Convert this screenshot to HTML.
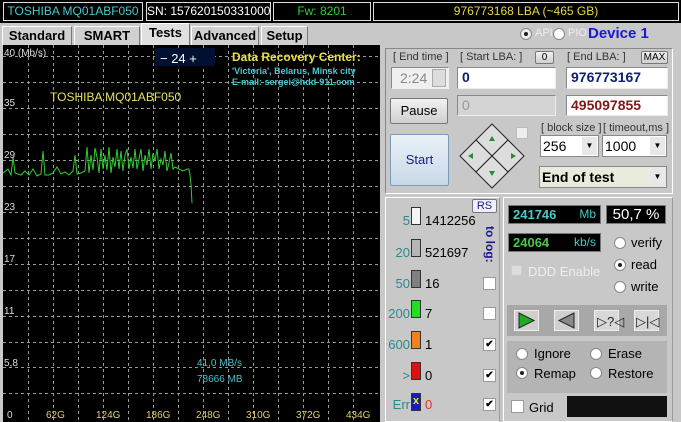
<!DOCTYPE html>
<html><head><meta charset="utf-8"><style>
*{margin:0;padding:0;box-sizing:border-box}
body{width:681px;height:422px;overflow:hidden;background:#c8c8c8;font-family:"Liberation Sans",sans-serif;font-size:12px;position:relative}
div,span{white-space:nowrap}
.a{position:absolute}
.seg{position:absolute;top:2px;height:19px;border:1px solid #ddd;background:#000;text-align:center;font-size:12px;line-height:17px;overflow:hidden}
.tab{position:absolute;top:26px;height:19px;border:1px solid #fff;border-right-color:#777;border-bottom:none;font-weight:bold;font-size:13px;line-height:17px;text-align:center;background:#d0d0d0}
.in{position:absolute;background:#fff;border:1px solid #888;border-right-color:#eee;border-bottom-color:#eee;font-weight:bold;font-size:14px;line-height:19px;padding-left:4px}
.btn{position:absolute;border:1px solid #777;border-radius:2px;background:linear-gradient(#f2f2f2,#cfcfcf);text-align:center;font-size:13px}
.lbl{position:absolute;font-size:11px;color:#333}
.sel{position:absolute;background:#fff;border:1px solid #888;font-size:14px;line-height:20px;padding-left:2px}
.sel:after{content:"▼";position:absolute;right:1px;top:1px;width:15px;height:18px;background:#e8e8e8;font-size:8px;text-align:center;line-height:18px}
.n{position:absolute;width:32px;text-align:right;color:#2a8a8a;font-size:13px;left:378px}
.bx{position:absolute;left:411px;width:10px;height:18px;border:1px solid #333}
.v{position:absolute;left:425px;font-size:13px}
.cb{position:absolute;left:483px;width:13px;height:13px;background:#fff;border:1px solid #999;font-size:10px;line-height:11px;text-align:center;font-weight:bold}
.rd{position:absolute;width:12px;height:12px;border-radius:50%;background:#fff;border:1px solid #888}
.rd.on:after{content:"";position:absolute;left:3px;top:3px;width:4px;height:4px;border-radius:50%;background:#123}
.rt{position:absolute;font-size:13px}
</style></head><body>
<div class="a" style="left:0;top:0;width:681px;height:23px;background:#000"></div>
<div class="seg" style="left:3px;width:140px;color:#4ec6d0">TOSHIBA MQ01ABF050</div>
<div class="seg" style="left:146px;width:125px;color:#fff">SN: 1576201503310007F</div>
<div class="seg" style="left:273px;width:98px;color:#3c3">Fw: 8201</div>
<div class="seg" style="left:373px;width:306px;color:#e8d84a">976773168 LBA (~465 GB)</div>
<div class="tab" style="left:2px;width:70px">Standard</div>
<div class="tab" style="left:74px;width:66px">SMART</div>
<div class="tab" style="left:141px;width:49px;top:23px;height:22px;background:#e0e0e0">Tests</div>
<div class="tab" style="left:191px;width:68px">Advanced</div>
<div class="tab" style="left:261px;width:47px">Setup</div>
<div class="rd on" style="left:520px;top:28px;background:#eee"></div><div class="rt" style="left:535px;top:27px;color:#eee;font-size:11px">API</div>
<div class="rd" style="left:553px;top:28px"></div><div class="rt" style="left:568px;top:27px;color:#eee;font-size:11px">PIO</div>
<div class="rt" style="left:588px;top:25px;color:#1a1ad0;font-weight:bold;font-size:15px">Device 1</div>

<svg class="a" style="left:3px;top:45px" width="377" height="377">
<rect width="377" height="377" fill="#000"/>
<g stroke="#999" stroke-dasharray="3,3" stroke-width="1">
<path d="M25.5 0V377M50.5 0V377M75.5 0V377M100.5 0V377M125.5 0V377M150.5 0V377M175.5 0V377M200.5 0V377M225.5 0V377M250.5 0V377M275.5 0V377M300.5 0V377M325.5 0V377M350.5 0V377"/>
<path d="M0 11.5H377M0 37.5H377M0 63.5H377M0 89.5H377M0 115.5H377M0 141.5H377M0 167.5H377M0 193.5H377M0 219.5H377M0 245.5H377M0 271.5H377M0 297.5H377M0 322.5H377M0 348.5H377"/>
</g>
<polyline fill="none" stroke="#3c3" stroke-width="1" points="0,128 5,124 8,130 10,112 12,128 18,130 22,126 26,130 30,124 34,131 38,129 40,106 42,130 46,130 50,128 54,122 58,129 62,127 66,130 70,126 72,110 74,129 78,128 82,126 84,102 86,128 88,110 90,125 92,103 94,112 96,128 98,104 100,124 102,110 104,125 106,102 108,128 110,112 112,122 114,104 116,124 118,106 120,126 122,110 124,104 126,124 128,112 130,123 132,104 134,124 136,114 138,104 140,126 142,110 144,120 146,104 148,124 150,108 152,116 154,104 156,124 158,114 160,120 162,106 164,126 166,118 168,108 170,124 172,122 176,124 180,126 184,124 186,124 187,130 188,140 189,158"/>
<g font-size="10" fill="#ddd" font-family="Liberation Sans">
<text x="1" y="11">40 (Mb/s)</text><text x="1" y="61">35</text><text x="1" y="113">29</text><text x="1" y="165">23</text><text x="1" y="217">17</text><text x="1" y="269">11</text><text x="1" y="321">5,8</text><text x="4" y="373">0</text>
</g>
<g font-size="10" fill="#e0d070" font-family="Liberation Sans">
<text x="43" y="373">62G</text><text x="93" y="373">124G</text><text x="143" y="373">186G</text><text x="193" y="373">248G</text><text x="243" y="373">310G</text><text x="293" y="373">372G</text><text x="343" y="373">434G</text>
</g>
<text x="47" y="56" font-size="12" fill="#e8e060" font-family="Liberation Sans">TOSHIBA MQ01ABF050</text>
<rect x="152" y="3" width="60" height="18" fill="#001030"/>
<text x="157" y="18" font-size="13" fill="#fff" font-family="Liberation Sans">−  24  +</text>
<text x="229" y="16" font-size="12" font-weight="bold" fill="#e8e040" font-family="Liberation Sans">Data Recovery Center:</text>
<text x="229" y="29" font-size="9" font-weight="bold" fill="#4ac8d0" font-family="Liberation Sans">'Victoria', Belarus, Minsk city</text>
<text x="229" y="40" font-size="9" font-weight="bold" fill="#4ac8d0" font-family="Liberation Sans">E-mail: sergei@hdd-911.com</text>
<text x="194" y="321" font-size="10" fill="#4ac0c8" font-family="Liberation Sans">41,0 MB/s</text>
<text x="194" y="337" font-size="10" fill="#4ac0c8" font-family="Liberation Sans">78666 MB</text>
</svg>

<div class="a" style="left:385px;top:48px;width:288px;height:146px;border:1px solid #888;border-right-color:#fff;border-bottom-color:#fff"></div>
<div class="lbl" style="left:393px;top:51px">[ End time ]</div>
<div class="lbl" style="left:460px;top:51px">[ Start LBA: ]</div>
<div class="btn" style="left:535px;top:51px;width:19px;height:13px;font-size:10px;line-height:11px">0</div>
<div class="lbl" style="left:567px;top:51px">[ End LBA: ]</div>
<div class="btn" style="left:641px;top:51px;width:27px;height:13px;font-size:10px;line-height:11px">MAX</div>
<div class="in" style="left:391px;top:67px;width:58px;height:22px;background:#f0f0f0;color:#888;font-weight:normal;line-height:20px;padding-left:8px">2:24</div>
<div class="a" style="left:432px;top:69px;width:14px;height:18px;background:#ddd;border:1px solid #aaa"></div>
<div class="in" style="left:457px;top:67px;width:99px;height:22px;color:#102070">0</div>
<div class="in" style="left:566px;top:67px;width:102px;height:22px;color:#102070">976773167</div>
<div class="btn" style="left:390px;top:98px;width:58px;height:26px;line-height:24px">Pause</div>
<div class="in" style="left:457px;top:95px;width:99px;height:21px;background:#d4d4d4;color:#999;font-weight:normal">0</div>
<div class="in" style="left:566px;top:95px;width:102px;height:21px;color:#801818">495097855</div>
<div class="btn" style="left:390px;top:134px;width:59px;height:52px;line-height:50px;background:linear-gradient(#eaf2f8,#c8d8e8);border-color:#7a9ab8;color:#1a1a90">Start</div>
<svg class="a" style="left:459px;top:123px" width="66" height="67"><g stroke="#222" fill="#ddd"><path d="M33 1L49 17L33 33L17 17Z"/><path d="M17 17L33 33L17 49L1 33Z"/><path d="M49 17L65 33L49 49L33 33Z"/><path d="M33 33L49 49L33 65L17 49Z"/></g><g fill="#2a8a3a"><path d="M33 13l3 5h-6z"/><path d="M9 33l5-3v6z"/><path d="M57 33l-5-3v6z"/><path d="M33 53l3-5h-6z"/></g></svg>
<div class="a" style="left:516px;top:127px;width:12px;height:12px;background:#eee;border:1px solid #bbb"></div>
<div class="lbl" style="left:541px;top:122px">[ block size ]</div>
<div class="lbl" style="left:603px;top:122px">[ timeout,ms ]</div>
<div class="sel" style="left:540px;top:135px;width:59px;height:22px">256</div>
<div class="sel" style="left:602px;top:135px;width:65px;height:22px">1000</div>
<div class="sel" style="left:539px;top:166px;width:128px;height:22px;background:#e8ecdc;font-weight:bold">End of test</div>

<div class="a" style="left:385px;top:197px;width:115px;height:225px;border:1px solid #fff;border-right-color:#999"></div>
<div class="btn" style="left:472px;top:199px;width:25px;height:14px;font-size:11px;line-height:12px;color:#1a1a90;background:#f0f0f8">RS</div>
<div class="a" style="top:226px;color:#1a1a90;font-weight:bold;font-size:12px;transform:rotate(90deg);transform-origin:left top;left:497px">to log:</div>
<div class="n" style="top:213px">5</div><div class="bx" style="top:207px;background:#f4f4f4"></div><div class="v" style="top:213px">1412256</div>
<div class="n" style="top:245px">20</div><div class="bx" style="top:239px;background:#b4b4b4"></div><div class="v" style="top:245px">521697</div>
<div class="n" style="top:276px">50</div><div class="bx" style="top:270px;background:#808080"></div><div class="v" style="top:276px">16</div>
<div class="n" style="top:306px">200</div><div class="bx" style="top:300px;background:#22dd22"></div><div class="v" style="top:306px">7</div>
<div class="n" style="top:337px">600</div><div class="bx" style="top:331px;background:#f08020"></div><div class="v" style="top:337px">1</div>
<div class="n" style="top:368px">&gt;</div><div class="bx" style="top:362px;background:#e01010"></div><div class="v" style="top:368px">0</div>
<div class="n" style="top:397px">Err</div><div class="bx" style="top:393px;background:#1a1ac0;color:#ee0;font-size:11px;line-height:14px;text-align:center;font-weight:bold">x</div><div class="v" style="top:397px;color:#e03030">0</div>
<div class="cb" style="top:277px"></div><div class="cb" style="top:307px"></div><div class="cb" style="top:338px">✔</div><div class="cb" style="top:369px">✔</div><div class="cb" style="top:398px">✔</div>

<div class="a" style="left:503px;top:197px;width:170px;height:225px;border:1px solid #fff;border-right-color:#999"></div>
<div class="a" style="left:508px;top:205px;width:93px;height:19px;background:#000;border:1px solid #777"><span class="a" style="left:4px;top:1px;color:#4ac8c8;font-weight:bold;font-size:13px">241746</span><span class="a" style="right:4px;top:1px;color:#4ac8c8;font-size:12px">Mb</span></div>
<div class="a" style="left:606px;top:205px;width:60px;height:19px;background:#000;border:1px solid #777;color:#fff;font-size:15px;text-align:center;line-height:17px">50,7 %</div>
<div class="a" style="left:508px;top:233px;width:93px;height:19px;background:#000;border:1px solid #777"><span class="a" style="left:4px;top:1px;color:#4ac84a;font-weight:bold;font-size:13px">24064</span><span class="a" style="right:4px;top:1px;color:#4ac8c8;font-size:12px">kb/s</span></div>
<div class="a" style="left:511px;top:265px;width:11px;height:11px;background:#ddd;border:1px solid #ccc"></div><div class="rt" style="left:528px;top:264px;color:#eee">DDD Enable</div>
<div class="rd" style="left:614px;top:237px"></div><div class="rt" style="left:631px;top:235px">verify</div>
<div class="rd on" style="left:614px;top:259px"></div><div class="rt" style="left:631px;top:257px">read</div>
<div class="rd" style="left:614px;top:281px"></div><div class="rt" style="left:631px;top:279px">write</div>
<div class="a" style="left:507px;top:305px;width:160px;height:31px;background:#a8a8a8"></div>
<svg class="a" style="left:514px;top:310px" width="150" height="22"><rect x="0.5" y="0.5" width="24" height="20" fill="#cfcfcf" stroke="#eee"/><path d="M5 3L20 10.5L5 18Z" fill="#22aa22" stroke="#222"/><rect x="40.5" y="0.5" width="24" height="20" fill="#cfcfcf" stroke="#eee"/><path d="M60 3L45 10.5L60 18Z" fill="#888" stroke="#222"/><rect x="80.5" y="0.5" width="24" height="20" fill="#d8d8d8" stroke="#eee"/><text x="83" y="16" font-size="13" font-family="Liberation Sans" fill="#222">▷?◁</text><rect x="120.5" y="0.5" width="24" height="20" fill="#d8d8d8" stroke="#eee"/><text x="122" y="16" font-size="13" font-family="Liberation Sans" fill="#222">▷|◁</text></svg>
<div class="a" style="left:507px;top:341px;width:160px;height:52px;background:#b4b4b4"></div>
<div class="rd" style="left:516px;top:348px"></div><div class="rt" style="left:534px;top:346px">Ignore</div>
<div class="rd" style="left:590px;top:348px"></div><div class="rt" style="left:608px;top:346px">Erase</div>
<div class="rd on" style="left:516px;top:367px"></div><div class="rt" style="left:534px;top:366px">Remap</div>
<div class="rd" style="left:590px;top:367px"></div><div class="rt" style="left:608px;top:366px">Restore</div>
<div class="a" style="left:511px;top:400px;width:13px;height:13px;background:#fff;border:1px solid #999"></div><div class="rt" style="left:529px;top:400px">Grid</div>
<div class="a" style="left:567px;top:396px;width:100px;height:21px;background:#111"></div>
</body></html>
